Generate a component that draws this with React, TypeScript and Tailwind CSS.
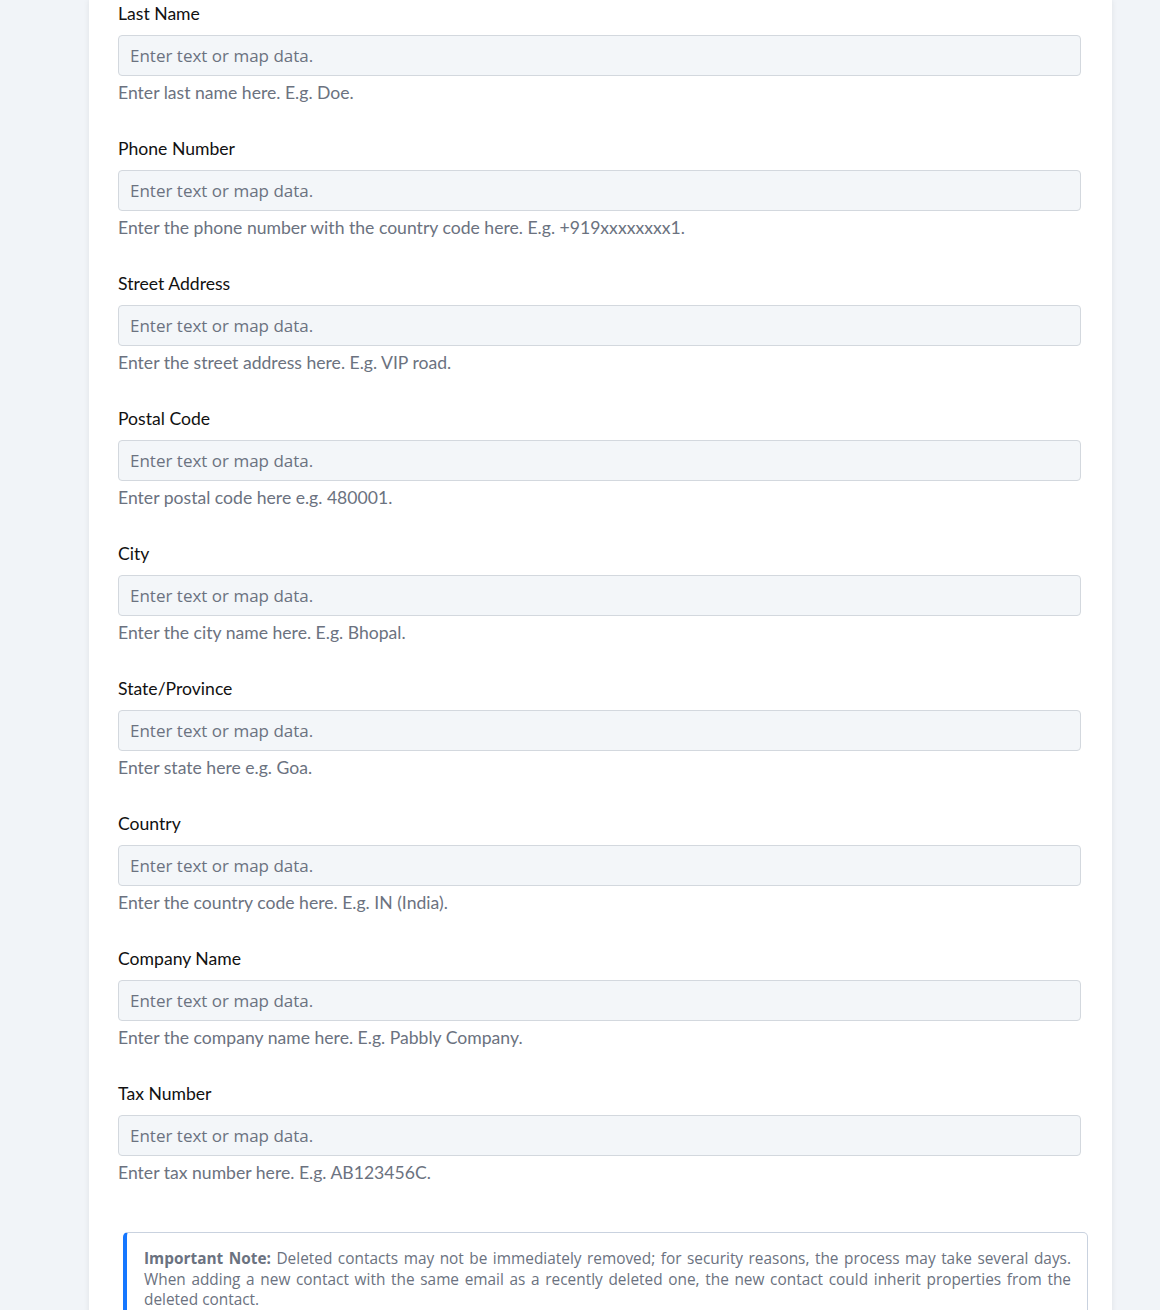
import React from "react";

type Field = { label: string; help: string };

const fields: Field[] = [
  { label: "Last Name", help: "Enter last name here. E.g. Doe." },
  { label: "Phone Number", help: "Enter the phone number with the country code here. E.g. +919xxxxxxxx1." },
  { label: "Street Address", help: "Enter the street address here. E.g. VIP road." },
  { label: "Postal Code", help: "Enter postal code here e.g. 480001." },
  { label: "City", help: "Enter the city name here. E.g. Bhopal." },
  { label: "State/Province", help: "Enter state here e.g. Goa." },
  { label: "Country", help: "Enter the country code here. E.g. IN (India)." },
  { label: "Company Name", help: "Enter the company name here. E.g. Pabbly Company." },
  { label: "Tax Number", help: "Enter tax number here. E.g. AB123456C." },
];

function FormField({ label, help }: Field) {
  return (
    <div className="flex flex-col">
      <label className="text-[17.6px] leading-6 text-[#111111] font-['Lato',sans-serif]">{label}</label>
      <input
        type="text"
        placeholder="Enter text or map data."
        className="mt-[9px] h-[41px] w-[963px] rounded-[4px] border border-[#d3d8de] bg-[#f3f6f9] px-[11px] text-[17px] text-[#4b5563] placeholder:text-[#6b7280] font-['Open_Sans',sans-serif] outline-none"
      />
      <p className="mt-[5px] text-[17.6px] leading-6 text-[#6b7280] font-['Lato',sans-serif]">{help}</p>
    </div>
  );
}

export default function App() {
  return (
    <div className="min-h-screen w-full bg-[#f1f4f8]">
      <div className="ml-[89px] w-[1023px] min-h-[1310px] bg-white pl-[29px] pr-[24px] pt-[2px] shadow-[0_0_6px_rgba(0,0,0,0.08)]">
        <div className="flex flex-col gap-[32px]">
          {fields.map((f) => (
            <FormField key={f.label} {...f} />
          ))}
        </div>
        <div className="mt-[47px] ml-[5px] w-[965px] rounded-[5px] border border-[#c9d2df] border-l-[4px] border-l-[#1677ff] pl-[17px] pr-[16px] pt-[16px] pb-[14px]">
          <p className="text-justify text-[15.4px] leading-[20.5px] text-[#6b7280] font-['Open_Sans',sans-serif]">
            <span className="font-bold">Important Note:</span> Deleted contacts may not be immediately removed; for
            security reasons, the process may take several days. When adding a new contact with the same email as a
            recently deleted one, the new contact could inherit properties from the deleted contact.
          </p>
        </div>
      </div>
    </div>
  );
}
